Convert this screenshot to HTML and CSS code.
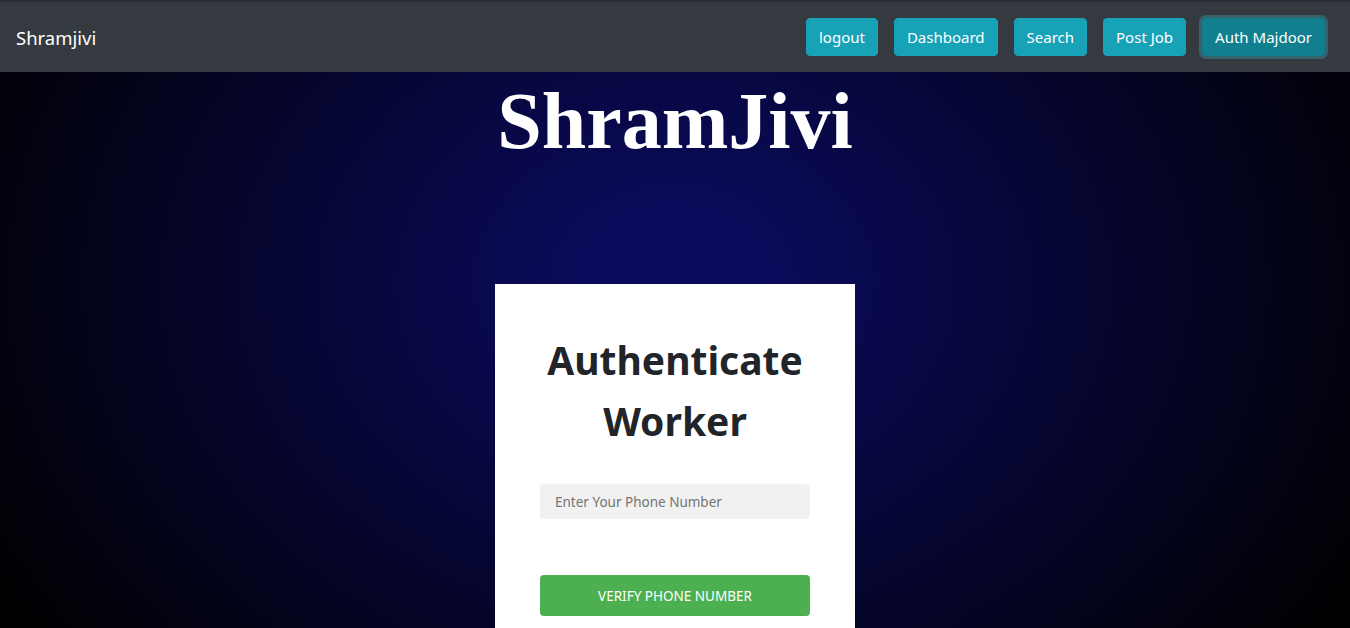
FILE: index.html
```html
<!DOCTYPE html>
<html lang="en">
<head>
<meta charset="utf-8">
<title>Shramjivi</title>
<link rel="stylesheet" href="styles.css">
</head>
<body>
<nav class="navbar">
  <a class="brand" href="#">Shramjivi</a>
  <div class="nav-buttons">
    <button class="nav-btn">logout</button>
    <button class="nav-btn">Dashboard</button>
    <button class="nav-btn">Search</button>
    <button class="nav-btn">Post Job</button>
    <button class="nav-btn active">Auth Majdoor</button>
  </div>
</nav>
<main class="hero">
  <h1 class="site-title">ShramJivi</h1>
  <section class="card">
    <h2 class="card-title">Authenticate Worker</h2>
    <input class="phone-input" type="text" placeholder="Enter Your Phone Number">
    <button class="verify-btn">VERIFY PHONE NUMBER</button>
  </section>
</main>
</body>
</html>
```
FILE: styles.css
```css
* { box-sizing: border-box; }
html, body { margin: 0; padding: 0; }
body {
  font-family: "Noto Sans", "Open Sans", sans-serif;
  background: #000;
  overflow: hidden;
  height: 628px;
}
.navbar {
  display: flex;
  align-items: center;
  justify-content: space-between;
  background: #343a40;
  border-top: 2px solid #2b2d30;
  padding: 16px 25px 16px 16px;
  height: 72px;
}
.brand {
  color: #fff;
  text-decoration: none;
  font-size: 18.5px;
}
.nav-buttons {
  display: flex;
  gap: 16px;
}
.nav-btn {
  font-family: "Noto Sans", sans-serif;
  font-size: 15px;
  height: 38px;
  padding: 0 12px;
  color: #fff;
  background: #17a2b8;
  border: 1px solid #17a2b8;
  border-radius: 4px;
}
.nav-btn.active {
  background: #117f8f;
  border-color: #117a8b;
  box-shadow: 0 0 0 3px rgba(58, 176, 195, 0.35);
}
.hero {
  display: flex;
  flex-direction: column;
  align-items: center;
  min-height: 700px;
  background: radial-gradient(ellipse 790px 620px at 50% 30%, #0a0a5a 12%, #000 100%);
}
.site-title {
  margin: 4px 0 0;
  font-family: "Liberation Serif", "Times New Roman", serif;
  font-weight: bold;
  font-size: 80px;
  line-height: normal;
  color: #fff;
}
.card {
  margin-top: 117px;
  width: 360px;
  background: #fff;
  padding: 45px 45px 40px;
  display: flex;
  flex-direction: column;
  align-items: stretch;
}
.card-title {
  margin: 0 0 33px;
  text-align: center;
  font-size: 39px;
  line-height: 61px;
  font-weight: bold;
  color: #212529;
}
.phone-input {
  height: 35px;
  border: none;
  background: #f1f1f1;
  border-radius: 4px;
  padding: 0 15px;
  font-family: "Noto Sans", sans-serif;
  font-size: 13.5px;
  color: #333;
}
.phone-input::placeholder { color: #747474; }
.verify-btn {
  margin-top: 56px;
  height: 41px;
  border: none;
  border-radius: 4px;
  background: #4caf50;
  color: #fff;
  font-family: "Noto Sans", sans-serif;
  font-size: 13.5px;
}
```
